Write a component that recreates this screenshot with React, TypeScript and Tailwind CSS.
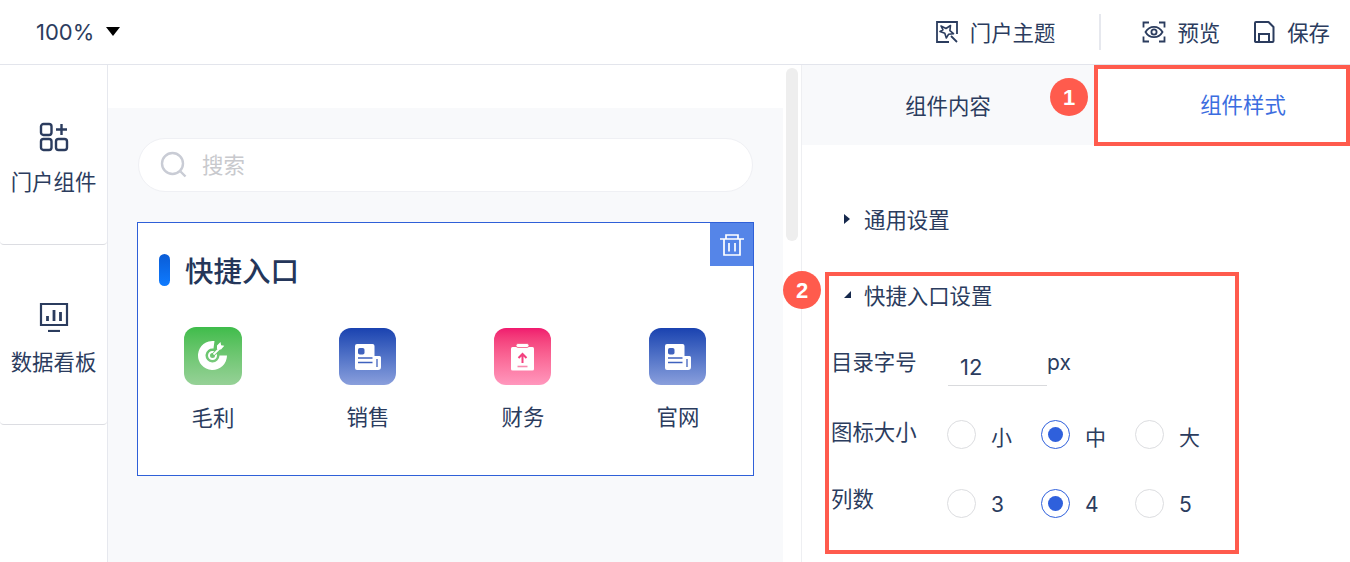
import type { ReactNode } from "react";

const sans = "font-['Noto_Sans_CJK_SC','Noto_Sans',sans-serif]";

function ThemeIcon() {
  return (
    <svg width="24" height="24" viewBox="0 0 24 24" fill="none" stroke="#2b3c5e" strokeWidth="1.800">
      <path d="M14 22H2V2h20v12" />
      <path d="M6 6l5 2.500 4.500-3-.6 5.200 3.600 3-5 .6-2.200 3.700-1.500-4.800L5 11.500l3-1.600z" strokeWidth="1.600" strokeLinejoin="round" />
      <path d="M16 16l6 6" />
    </svg>
  );
}

function PreviewIcon() {
  return (
    <svg width="24" height="24" viewBox="0 0 24 24" fill="none" stroke="#2b3c5e" strokeWidth="1.800">
      <path d="M7 2.500H1.500v5M17 2.500h5.500v5M7 21.500H1.500v-5M17 21.500h5.500v-5" />
      <path d="M3.500 12c2-3.500 5-5.200 8.500-5.200s6.500 1.700 8.500 5.200c-2 3.500-5 5.200-8.500 5.200S5.500 15.500 3.500 12z" />
      <circle cx="12" cy="12" r="2.600" />
    </svg>
  );
}

function SaveIcon() {
  return (
    <svg width="22" height="24" viewBox="0 0 22 24" fill="none" stroke="#2b3c5e" strokeWidth="2">
      <path d="M2 3a1 1 0 0 1 1-1h12.500L20.500 7v14a1 1 0 0 1-1 1H2.500a1 1 0 0 1-.5-1z" strokeLinejoin="round" />
      <path d="M6 22v-8h10v8" />
    </svg>
  );
}

function WidgetsIcon() {
  return (
    <svg width="30" height="30" viewBox="0 0 30 30" fill="none" stroke="#2b3c5e" strokeWidth="2.400">
      <rect x="2" y="2" width="10.500" height="11" rx="2.500" />
      <rect x="2" y="17" width="10.500" height="11" rx="2.500" />
      <rect x="17" y="17" width="11" height="11" rx="2.500" />
      <path d="M22.500 2v11M17 7.500h11" />
    </svg>
  );
}

function BoardIcon() {
  return (
    <svg width="30" height="30" viewBox="0 0 30 30" fill="none" stroke="#2b3c5e" strokeWidth="2.200">
      <path d="M2 2h26v21H2z" />
      <path d="M9 29h12" />
      <path d="M8.500 14v5M15 8v11M21.500 10v9" strokeWidth="2.800" />
    </svg>
  );
}

function SideItem({ icon, label }: { icon: ReactNode; label: string }) {
  return (
    <div className="flex h-[180px] flex-col items-center rounded-b border-b border-[#dcdde2] pt-[57px]">
      {icon}
      <span className="mt-[13px] text-[21.400px] leading-[32px] text-[#2b3c5e]">{label}</span>
    </div>
  );
}

function TargetGlyph() {
  return (
    <svg width="32" height="32" viewBox="0 0 32 32">
      <g transform="translate(1 -2)">
        <path d="M16.500 3.100a14.500 14.500 0 1 0 12.500 14.400h-7.500a7 7 0 1 1-6-7z" fill="#fff" />
        <circle cx="14.500" cy="17.500" r="3.500" fill="none" stroke="#fff" strokeWidth="2" />
        <path d="M14.500 17.500L23 9" stroke="#6cc46e" strokeWidth="3.400" />
        <path d="M15.500 16.500l7-7" stroke="#fff" strokeWidth="1.800" />
        <path d="M19 7.500l3.500-3.500.6 3.200 3.200.6-3.300 3.600-4-.4z" fill="#fff" />
      </g>
    </svg>
  );
}

function PaperGlyph({ tint }: { tint: string }) {
  return (
    <svg width="28" height="28" viewBox="0 0 28 28">
      <path d="M1 3a2 2 0 0 1 2-2h15.500a2 2 0 0 1 2 2v10h5a1.500 1.500 0 0 1 1.500 1.500V24a3 3 0 0 1-3 3H3a2 2 0 0 1-2-2z" fill="#fff" />
      <path d="M23 16v8" stroke={tint} strokeWidth="1.300" />
      <rect x="4" y="5" width="6.500" height="6.500" rx="1.800" fill={tint} />
      <path d="M4 15h14.500M4 19.500h14.500" stroke={tint} strokeWidth="1.500" />
    </svg>
  );
}

function ClipGlyph() {
  return (
    <svg width="26" height="28" viewBox="0 0 26 28">
      <rect x="1" y="4" width="23" height="23.500" rx="1.500" fill="#fff" />
      <rect x="6" y="0.500" width="13" height="4" rx="2" fill="#fff" stroke="#f2557f" strokeWidth="0.800" />
      <path d="M12.500 20v-8M8.500 15l4-4 4 4" fill="none" stroke="#f3417f" strokeWidth="2" />
      <path d="M7.500 23.500h10" stroke="#f88ab0" strokeWidth="1.600" />
    </svg>
  );
}

const entries = [
  { label: "毛利", tile: "bg-gradient-to-b from-[#3ebc4a] to-[#96d197] size-[58px] rounded-[12px]", glyph: <TargetGlyph /> },
  { label: "销售", tile: "mt-px mb-[-1px] mr-px bg-gradient-to-b from-[#1a42b0] to-[#8a9fdc] size-[57px] rounded-[12px]", glyph: <PaperGlyph tint="#3f62be" /> },
  { label: "财务", tile: "mt-px mb-[-1px] mr-px bg-gradient-to-b from-[#f0186e] to-[#ff97bd] size-[57px] rounded-[12px]", glyph: <ClipGlyph /> },
  { label: "官网", tile: "mt-px mb-[-1px] mr-px bg-gradient-to-b from-[#1a42b0] to-[#8a9fdc] size-[57px] rounded-[12px]", glyph: <PaperGlyph tint="#3f62be" /> },
];

function Radio({ on, label }: { on?: boolean; label: string }) {
  return (
    <div className="flex w-[94px] items-center">
      <span
        className={
          on
            ? "flex size-[29px] items-center justify-center rounded-full border border-[#2f60dc] bg-white"
            : "flex size-[29px] items-center justify-center rounded-full border border-[#dcdde0] bg-white"
        }
      >
        {on && <span className="size-[15px] rounded-full bg-[#2f60dc]" />}
      </span>
      <span className="ml-[15px] mt-[3px] text-[21px] leading-[30px] text-[#2b3c5e]">{label}</span>
    </div>
  );
}

function Badge({ n, className }: { n: number; className: string }) {
  return (
    <span
      className={
        "absolute flex size-[38px] items-center justify-center rounded-full bg-[#ff5b4d] font-['Liberation_Sans',sans-serif] text-[22px] font-bold text-white " +
        className
      }
    >
      {n}
    </span>
  );
}

export default function App() {
  return (
    <div className={"relative h-[562px] w-[1350px] overflow-hidden bg-white " + sans}>
      <header className="flex h-[65px] items-center border-b border-[#e3e5ec] text-[21.400px] text-[#2b3c5e]">
        <span className="ml-[36px] font-['Inter',sans-serif] text-[22px] leading-none">100%</span>
        <span className="ml-[12px] mb-[1px] h-0 w-0 border-x-[7px] border-t-[9px] border-x-transparent border-t-black" />
        <div className="ml-auto flex items-center">
          <ThemeIcon />
          <span className="ml-[11px]">门户主题</span>
          <span className="ml-[44px] mr-[41px] h-[36px] w-[2px] bg-[#e6e8ee]" />
          <PreviewIcon />
          <span className="ml-[11px]">预览</span>
          <span className="ml-[33px]"><SaveIcon /></span>
          <span className="ml-[12px] mr-[20px]">保存</span>
        </div>
      </header>

      <div className="flex h-[497px]">
        <aside className="w-[108px] shrink-0 border-r border-[#e6e8ee]">
          <SideItem icon={<WidgetsIcon />} label="门户组件" />
          <SideItem icon={<BoardIcon />} label="数据看板" />
        </aside>

        <main className="flex w-[694px] shrink-0 border-r border-[#eeeff2] bg-white">
          <div className="w-[675px] pt-[43px]">
            <div className="h-full bg-[#f8f9fb] pl-[30px] pt-[30px]">
              <div className="flex h-[54px] w-[615px] items-center rounded-full border border-[#eff0f4] bg-white pl-[21px]">
                <svg width="28" height="28" viewBox="0 0 28 28" fill="none" stroke="#c9ccd5" strokeWidth="2.400">
                  <circle cx="12.500" cy="12.500" r="10.500" />
                  <path d="M20.500 20.500l5 5" />
                </svg>
                <span className="ml-[14px] mt-[-1px] text-[21.400px] text-[#c8c9cd]">搜索</span>
              </div>

              <section className="relative mt-[30px] ml-[-1px] h-[254px] w-[617px] border border-[#2f60d8] bg-white">
                <span className="absolute right-0 top-0 flex size-[43px] items-center justify-center bg-[#5585e8]">
                  <svg width="24" height="24" viewBox="0 0 24 24" fill="none" stroke="#fff" strokeWidth="1.700">
                    <path d="M0 6h24M6 6V2h12v4M4 6v16h16V6M9 10v8.500M15 10v8.500" />
                  </svg>
                </span>
                <div className="flex items-center pl-[21px] pt-[31px]">
                  <span className="h-[32px] w-[11px] rounded-full bg-gradient-to-b from-[#0a5cd6] to-[#0f7bff]" />
                  <h2 className="ml-[15px] text-[28.500px] font-medium leading-[32px] text-[#24365a]">快捷入口</h2>
                </div>
                <div className="ml-[-2.500px] mt-[41px] grid grid-cols-[repeat(4,155px)]">
                  {entries.map((e) => (
                    <div key={e.label} className="flex flex-col items-center">
                      <span className={"flex items-center justify-center " + e.tile}>{e.glyph}</span>
                      <span className="mt-[16px] text-[21.400px] leading-[32px] text-[#2b3c5e]">{e.label}</span>
                    </div>
                  ))}
                </div>
              </section>
            </div>
          </div>
          <div className="w-[18px] pl-[3px] pt-[3px]">
            <div className="h-[173px] w-[12px] rounded-full bg-[#eeeeee]" />
          </div>
        </main>

        <div className="min-w-0 flex-1 text-[#2b3c5e]">
          <div className="flex h-[81px] text-[21.400px]">
            <div className="flex h-[80px] w-[292px] items-center justify-center bg-[#f8f9fb]">
              <span>组件内容</span>
            </div>
            <div className="flex h-[80px] flex-1 items-center justify-center border-b border-[#2f60d8] pl-[42px] text-[#3b6de0]">
              组件样式
            </div>
          </div>

          <div className="mt-[58px] flex h-[30px] items-center pl-[42px] text-[21.400px]">
            <span className="h-0 w-0 border-y-[5px] border-l-[6px] border-y-transparent border-l-[#16294d]" />
            <span className="ml-[14px]">通用设置</span>
          </div>
          <div className="mt-[46px] flex h-[30px] items-center pl-[42px] text-[21.400px]">
            <span className="mt-[-2px] h-0 w-0 border-b-[7px] border-l-[7px] border-b-[#16294d] border-l-transparent" />
            <span className="ml-[13px]">快捷入口设置</span>
          </div>

          <div className="mt-[31px] flex h-[45px] pl-[29px]">
            <span className="mt-[-1px] w-[117px] text-[21.400px] leading-[42px]">目录字号</span>
            <span className="h-[45px] w-[99px] border-b border-[#d9dadd] pl-[12px] pt-[10px] font-['Inter',sans-serif] text-[22px] leading-[32px]">12</span>
            <span className="mt-[1px] font-['Inter',sans-serif] text-[21px] leading-[42px]">px</span>
          </div>
          <div className="mt-[25px] flex h-[40px] pl-[29px]">
            <span className="mt-[-1px] w-[116px] text-[21.400px] leading-[42px]">图标大小</span>
            <div className="mt-[9px] flex h-[29px]">
              <Radio label="小" />
              <Radio on label="中" />
              <Radio label="大" />
            </div>
          </div>
          <div className="mt-[27px] flex h-[40px] pl-[29px]">
            <span className="mt-[-1px] w-[116px] text-[21.400px] leading-[42px]">列数</span>
            <div className="mt-[11px] flex h-[29px] font-['Inter',sans-serif]">
              <Radio label="3" />
              <Radio on label="4" />
              <Radio label="5" />
            </div>
          </div>
        </div>
      </div>

      {/* annotations drawn over the screenshot */}
      <span className="absolute left-[1094px] top-[65px] h-[81px] w-[256px] border-4 border-[#ff5b4d]" />
      <span className="absolute left-[825px] top-[272px] h-[282px] w-[414px] border-4 border-[#ff5b4d]" />
      <Badge n={1} className="left-[1050px] top-[78px]" />
      <Badge n={2} className="left-[783px] top-[271px]" />
    </div>
  );
}
